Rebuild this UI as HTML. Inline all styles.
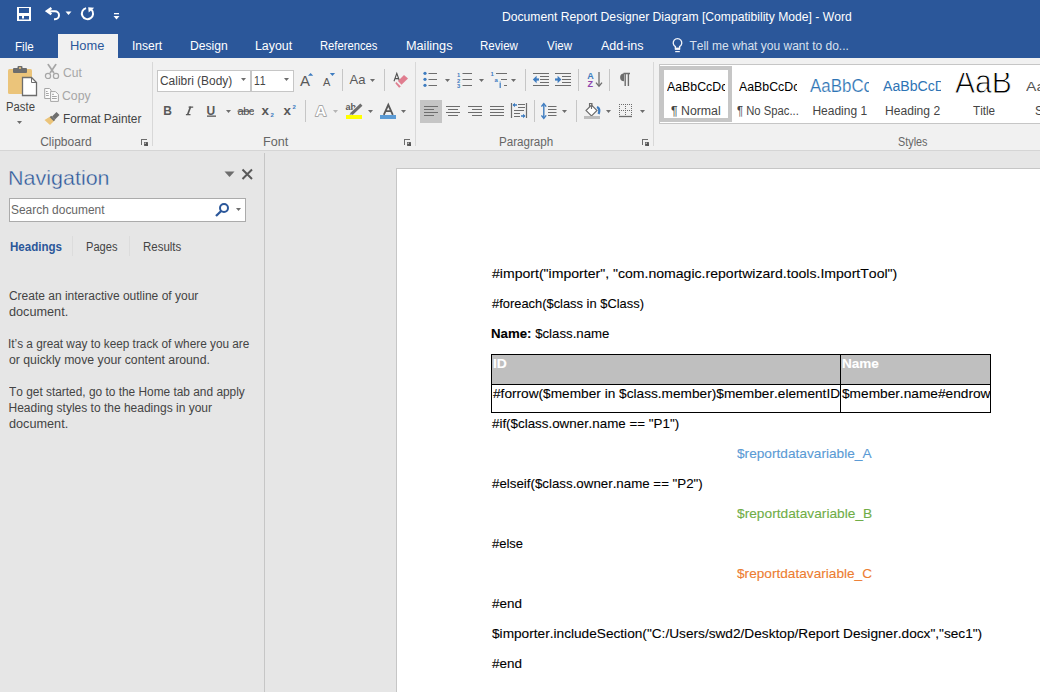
<!DOCTYPE html>
<html><head><meta charset="utf-8"><title>Word</title>
<style>
html,body{margin:0;padding:0;width:1040px;height:692px;overflow:hidden;background:#E6E6E6}
body{position:relative;font-family:"Liberation Sans",sans-serif}
.a{position:absolute;display:block}
.t{position:absolute;white-space:nowrap;transform-origin:0 0;font-kerning:none;font-variant-ligatures:none}
.d{-webkit-text-stroke:0.1px currentColor}
</style></head><body>
<div class="a" style="left:0px;top:0px;width:1040px;height:58px;background:#2B579A;"></div>
<div class="a" style="left:58px;top:34px;width:60px;height:24px;background:#F1F1F1;"></div>
<div class="t" style="left:502.00px;top:11px;font-size:12px;line-height:12px;color:#FFFFFF;transform:scaleX(1.0125);">Document Report Designer Diagram [Compatibility Mode] - Word</div>
<div class="t" style="left:14.84px;top:41px;font-size:12px;line-height:12px;color:#FFFFFF;transform:scaleX(0.9709);">File</div>
<div class="t" style="left:131.89px;top:40px;font-size:12px;line-height:12px;color:#FFFFFF;transform:scaleX(1.0064);">Insert</div>
<div class="t" style="left:190.00px;top:40px;font-size:12px;line-height:12px;color:#FFFFFF;transform:scaleX(1.0115);">Design</div>
<div class="t" style="left:254.99px;top:40px;font-size:12px;line-height:12px;color:#FFFFFF;transform:scaleX(1.0298);">Layout</div>
<div class="t" style="left:320.08px;top:40px;font-size:12px;line-height:12px;color:#FFFFFF;transform:scaleX(0.9342);">References</div>
<div class="t" style="left:405.96px;top:40px;font-size:12px;line-height:12px;color:#FFFFFF;transform:scaleX(1.0564);">Mailings</div>
<div class="t" style="left:480.05px;top:40px;font-size:12px;line-height:12px;color:#FFFFFF;transform:scaleX(0.9638);">Review</div>
<div class="t" style="left:546.95px;top:40px;font-size:12px;line-height:12px;color:#FFFFFF;transform:scaleX(0.9620);">View</div>
<div class="t" style="left:600.98px;top:40px;font-size:12px;line-height:12px;color:#FFFFFF;transform:scaleX(1.0440);">Add-ins</div>
<div class="t" style="left:70.24px;top:40px;font-size:12px;line-height:12px;color:#2B579A;transform:scaleX(1.0724);">Home</div>
<div class="t" style="left:689.43px;top:40px;font-size:12px;line-height:12px;color:#D9E1EE;">Tell me what you want to do...</div>
<div class="a" style="left:0px;top:58px;width:1040px;height:92px;background:#F1F1F1;"></div>
<div class="a" style="left:0px;top:150px;width:1040px;height:1px;background:#D5D5D5;"></div>
<div class="a" style="left:157px;top:70px;width:94px;height:22px;background:#FFFFFF;box-sizing:border-box;border:1px solid #C6C6C6;"></div>
<div class="a" style="left:251px;top:70px;width:43px;height:22px;background:#FFFFFF;box-sizing:border-box;border:1px solid #C6C6C6;"></div>
<div class="a" style="left:0px;top:151px;width:264px;height:541px;background:#E6E6E6;"></div>
<div class="a" style="left:264px;top:153px;width:1px;height:539px;background:#C6C6C6;"></div>
<div class="a" style="left:265px;top:151px;width:775px;height:541px;background:#E6E6E6;"></div>
<div class="a" style="left:9px;top:198px;width:237px;height:24px;background:#FFFFFF;box-sizing:border-box;border:1px solid #ABABAB;"></div>
<div class="a" style="left:659px;top:64px;width:381px;height:60px;background:#FFFFFF;box-sizing:border-box;border:1px solid #C6C6C6;border-right:none;"></div>
<div class="a" style="left:660px;top:66px;width:72px;height:56px;background:#FFFFFF;box-sizing:border-box;border:4px solid #C6C6C6;"></div>
<div class="a" style="left:396px;top:168px;width:644px;height:524px;background:#FFFFFF;box-sizing:border-box;border-left:1px solid #C6C6C6;border-top:1px solid #C6C6C6;"></div>
<svg class="a" style="left:17px;top:7px;" width="14" height="14" viewBox="0 0 14 14"><path fill-rule="evenodd" fill="#fff" d="M0,0 H14 V14 H0 Z M2,1 V6 H12 V1 Z M2,9 H5 V11.4 H7 V9 H12 V12.6 H2 Z"/></svg>
<svg class="a" style="left:45px;top:6px;" width="16" height="16" viewBox="0 0 16 16"><path d="M3,5.2 H10 A4,4 0 0 1 10,13.2 H9" fill="none" stroke="#fff" stroke-width="2"/><path d="M6.4,1.9 L1.9,5.1 L6.4,8.3" fill="none" stroke="#fff" stroke-width="2.4" stroke-linejoin="miter"/><polygon points="1.5,5.1 5,3 5,7.2" fill="#fff"/></svg>
<svg class="a" style="left:65px;top:11px;" width="7" height="5" viewBox="0 0 7 5"><polygon points="0.5,0.5 6.5,0.5 3.5,4" fill="#fff"/></svg>
<svg class="a" style="left:80px;top:6px;" width="15" height="15" viewBox="0 0 15 15"><path d="M6.05,2.1 A5.6,5.6 0 1 0 11.5,3.6" fill="none" stroke="#fff" stroke-width="2"/><polygon points="8.2,1.2 14.2,1.8 8.7,6.6" fill="#fff"/></svg>
<svg class="a" style="left:113px;top:12px;" width="7" height="8" viewBox="0 0 7 8"><rect x="1" y="1" width="5" height="1.3" fill="#fff"/><polygon points="0.5,4 6.5,4 3.5,7.5" fill="#fff"/></svg>
<svg class="a" style="left:671px;top:37px;" width="13" height="18" viewBox="0 0 13 18"><path d="M4.4,11.5 V9.6 A4.3,4.3 0 1 1 8.6,9.6 V11.5" fill="none" stroke="#F4F6FA" stroke-width="1.3"/><rect x="3.8" y="10.6" width="5.4" height="2.3" fill="#F4F6FA"/><rect x="4.2" y="14" width="4.6" height="1.2" fill="#F4F6FA"/></svg>
<svg class="a" style="left:7px;top:65px;" width="31" height="32" viewBox="0 0 31 32"><rect x="1" y="4" width="24" height="25" rx="1.5" fill="#EBC47A"/><rect x="6" y="3" width="14" height="5" rx="1" fill="#6D6D6D"/><rect x="10.5" y="1" width="5" height="4" rx="1" fill="#6D6D6D"/><rect x="12" y="2.2" width="2" height="1.6" fill="#EBC47A"/><path d="M15.5,12.5 H24.5 L29.5,17.5 V30.5 H15.5 Z" fill="#fff" stroke="#6D6D6D" stroke-width="1.3"/><path d="M24.5,12.5 V17.5 H29.5" fill="none" stroke="#6D6D6D" stroke-width="1"/></svg>
<svg class="a" style="left:16px;top:120px;" width="7" height="5" viewBox="0 0 7 5"><polygon points="1,1 6,1 3.5,4" fill="#6D6D6D"/></svg>
<svg class="a" style="left:42px;top:60px;" width="20" height="22" viewBox="0 0 20 22"><path d="M6.2,4.6 L11.6,12.6 M13.8,4.6 L8.4,12.6" stroke="#A6A6A6" stroke-width="1.7" stroke-linecap="round"/><circle cx="6" cy="15.9" r="2.6" fill="none" stroke="#A6A6A6" stroke-width="1.2"/><circle cx="14" cy="15.9" r="2.6" fill="none" stroke="#A6A6A6" stroke-width="1.2"/></svg>
<svg class="a" style="left:42px;top:84px;" width="20" height="20" viewBox="0 0 20 20"><path d="M2.7,4.5 H7.5 L9,6 V14.5 H2.7 Z" fill="#FCFCFC" stroke="#A6A6A6" stroke-width="1"/><path d="M8.6,7.6 H13.5 L16.4,10.5 V17.4 H8.6 Z" fill="#FCFCFC" stroke="#A6A6A6" stroke-width="1"/><path d="M4,7.5 H5.6 M4,9.5 H6.8 M4,11.5 H6.8 M10,10.3 H12 M10,12.5 H14.8 M10,14.5 H14.8" stroke="#A6A6A6" stroke-width="1"/></svg>
<svg class="a" style="left:44px;top:110px;" width="17" height="16" viewBox="0 0 17 16"><path d="M0.5,10 L7,6 L11,10 L6,15 Z" fill="#EBC47A"/><path d="M8,6.5 L12.5,2 L15.5,5 L11,9.5 Z" fill="#6D6D6D"/><path d="M6.5,6.5 L10.5,10.5" stroke="#6D6D6D" stroke-width="2"/></svg>
<svg class="a" style="left:141px;top:139px;" width="8" height="8" viewBox="0 0 8 8"><rect x="0" y="0" width="6" height="1" fill="#6D6D6D"/><rect x="0" y="0" width="1" height="6" fill="#6D6D6D"/><polygon points="3,3 7,3 7,7 3,7" fill="#6D6D6D"/><polygon points="3,3 5,3 7,5 7,7 5,7 3,5" fill="#555"/><rect x="3.6" y="3.6" width="1.2" height="1.2" fill="#F1F1F1"/></svg>
<svg class="a" style="left:404px;top:139px;" width="8" height="8" viewBox="0 0 8 8"><rect x="0" y="0" width="6" height="1" fill="#6D6D6D"/><rect x="0" y="0" width="1" height="6" fill="#6D6D6D"/><polygon points="3,3 7,3 7,7 3,7" fill="#6D6D6D"/><polygon points="3,3 5,3 7,5 7,7 5,7 3,5" fill="#555"/><rect x="3.6" y="3.6" width="1.2" height="1.2" fill="#F1F1F1"/></svg>
<svg class="a" style="left:642px;top:139px;" width="8" height="8" viewBox="0 0 8 8"><rect x="0" y="0" width="6" height="1" fill="#6D6D6D"/><rect x="0" y="0" width="1" height="6" fill="#6D6D6D"/><polygon points="3,3 7,3 7,7 3,7" fill="#6D6D6D"/><polygon points="3,3 5,3 7,5 7,7 5,7 3,5" fill="#555"/><rect x="3.6" y="3.6" width="1.2" height="1.2" fill="#F1F1F1"/></svg>
<svg class="a" style="left:240px;top:77px;" width="7" height="5" viewBox="0 0 7 5"><polygon points="1,1 6,1 3.5,4" fill="#6D6D6D"/></svg>
<svg class="a" style="left:283px;top:77px;" width="7" height="5" viewBox="0 0 7 5"><polygon points="1,1 6,1 3.5,4" fill="#6D6D6D"/></svg>
<svg class="a" style="left:298px;top:70px;" width="18" height="18" viewBox="0 0 18 18"><text x="2" y="16.2" font-family="Liberation Sans" font-size="15" fill="#595959">A</text><polygon points="10,5.8 15.2,5.8 12.6,3" fill="#3E7CC0"/></svg>
<svg class="a" style="left:321px;top:70px;" width="16" height="18" viewBox="0 0 16 18"><text x="2" y="16.2" font-family="Liberation Sans" font-size="11" fill="#595959">A</text><polygon points="8.8,3 14.1,3 11.45,6" fill="#3E7CC0"/></svg>
<div class="a" style="left:342px;top:69px;width:1px;height:22px;background:#C6C6C6;"></div>
<svg class="a" style="left:348px;top:70px;" width="20" height="18" viewBox="0 0 20 18"><text x="1.6" y="14.3" font-family="Liberation Sans" font-size="13" fill="#595959">Aa</text></svg>
<svg class="a" style="left:369px;top:78px;" width="7" height="5" viewBox="0 0 7 5"><polygon points="1,1 6,1 3.5,4" fill="#6D6D6D"/></svg>
<div class="a" style="left:384px;top:69px;width:1px;height:22px;background:#C6C6C6;"></div>
<svg class="a" style="left:388px;top:68px;" width="24" height="24" viewBox="0 0 24 24"><path d="M6,13.2 L8.8,5.4 L11.6,13.2 M7.1,10.6 H10.6" fill="none" stroke="#505050" stroke-width="1.1"/><polygon points="10,13 16,7 20,10.6 13.5,16.8" fill="#E07D8F"/><polygon points="7.3,15.3 8.3,14 12.8,18.4 11.1,19.8" fill="#E07D8F"/></svg>
<svg class="a" style="left:160px;top:102px;" width="16" height="16" viewBox="0 0 16 16"><text x="3.2" y="12.9" font-family="Liberation Sans" font-weight="bold" font-size="12" fill="#595959">B</text></svg>
<svg class="a" style="left:183px;top:102px;" width="14" height="16" viewBox="0 0 14 16"><path d="M7.6,4.6 L4.6,12.8" stroke="#595959" stroke-width="1.7"/><path d="M5.6,5.1 H10.2 M2.9,12.6 H7.5" stroke="#595959" stroke-width="1.3"/></svg>
<svg class="a" style="left:204px;top:102px;" width="16" height="17" viewBox="0 0 16 17"><text x="2.5" y="12.9" font-family="Liberation Sans" font-weight="bold" font-size="12" fill="#595959">U</text><rect x="3" y="13.5" width="9" height="1.3" fill="#595959"/></svg>
<svg class="a" style="left:225px;top:109px;" width="7" height="5" viewBox="0 0 7 5"><polygon points="1,1 6,1 3.5,4" fill="#6D6D6D"/></svg>
<svg class="a" style="left:236px;top:102px;" width="20" height="16" viewBox="0 0 20 16"><text x="1.6" y="12.8" font-family="Liberation Sans" font-size="11" fill="#505050" letter-spacing="-0.5">abc</text><rect x="1.5" y="8.6" width="16.5" height="1.1" fill="#505050"/></svg>
<svg class="a" style="left:260px;top:102px;" width="16" height="17" viewBox="0 0 16 17"><text x="1.4" y="13.1" font-family="Liberation Sans" font-weight="bold" font-size="13.4" fill="#595959">x</text><text x="10.6" y="14.8" font-family="Liberation Sans" font-weight="bold" font-size="6" fill="#3E7CC0">2</text></svg>
<svg class="a" style="left:282px;top:102px;" width="16" height="17" viewBox="0 0 16 17"><text x="1.4" y="13.1" font-family="Liberation Sans" font-weight="bold" font-size="13.4" fill="#595959">x</text><text x="10.4" y="6.8" font-family="Liberation Sans" font-weight="bold" font-size="6" fill="#3E7CC0">2</text></svg>
<div class="a" style="left:305px;top:100px;width:1px;height:22px;background:#C6C6C6;"></div>
<svg class="a" style="left:312px;top:101px;" width="18" height="18" viewBox="0 0 18 18"><text x="3.2" y="15.4" font-family="Liberation Sans" font-weight="bold" font-size="15.4" fill="#fff" stroke="#A6A6A6" stroke-width="1.8" paint-order="stroke" stroke-linejoin="round">A</text></svg>
<svg class="a" style="left:332px;top:109px;" width="7" height="5" viewBox="0 0 7 5"><polygon points="1,1 6,1 3.5,4" fill="#B5B5B5"/></svg>
<svg class="a" style="left:344px;top:101px;" width="20" height="19" viewBox="0 0 20 19"><text x="1.6" y="9.2" font-family="Liberation Sans" font-weight="bold" font-size="9" fill="#595959">ab</text><path d="M7.6,12.8 L17.4,3.6" stroke="#F1F1F1" stroke-width="4.6"/><path d="M7.6,12.8 L17.4,3.6" stroke="#6D6D6D" stroke-width="3"/><polygon points="5.4,13.8 7,11.4 8.8,13.2" fill="#6D6D6D"/><rect x="2" y="14" width="16" height="4" fill="#FFFF00"/></svg>
<svg class="a" style="left:367px;top:109px;" width="7" height="5" viewBox="0 0 7 5"><polygon points="1,1 6,1 3.5,4" fill="#6D6D6D"/></svg>
<svg class="a" style="left:378px;top:101px;" width="20" height="19" viewBox="0 0 20 19"><path d="M5.8,13.8 L10.3,3.8 L14.8,13.8 M7.6,10.2 H13" fill="none" stroke="#595959" stroke-width="1.8"/><rect x="2" y="14" width="16" height="4" fill="#5B9BD5"/></svg>
<svg class="a" style="left:400px;top:109px;" width="7" height="5" viewBox="0 0 7 5"><polygon points="1,1 6,1 3.5,4" fill="#6D6D6D"/></svg>
<svg class="a" style="left:422px;top:70px;" width="17" height="18" viewBox="0 0 17 18"><circle cx="3" cy="3.3" r="1.6" fill="#3E7CC0"/><circle cx="3" cy="9.3" r="1.6" fill="#3E7CC0"/><circle cx="3" cy="15.3" r="1.6" fill="#3E7CC0"/><path d="M6.5,3.5 H15 M6.5,9.5 H15 M6.5,15.5 H15" stroke="#6D6D6D" stroke-width="1.2"/></svg>
<svg class="a" style="left:444px;top:78px;" width="7" height="5" viewBox="0 0 7 5"><polygon points="1,1 6,1 3.5,4" fill="#6D6D6D"/></svg>
<svg class="a" style="left:456px;top:70px;" width="17" height="18" viewBox="0 0 17 18"><text x="1" y="6.5" font-family="Liberation Sans" font-weight="bold" font-size="5.8" fill="#3E7CC0">1</text><text x="1" y="12.5" font-family="Liberation Sans" font-weight="bold" font-size="5.8" fill="#3E7CC0">2</text><text x="1" y="18" font-family="Liberation Sans" font-weight="bold" font-size="5.8" fill="#3E7CC0">3</text><path d="M6.5,3.5 H16 M6.5,9.5 H16 M6.5,15.5 H16" stroke="#6D6D6D" stroke-width="1.2"/></svg>
<svg class="a" style="left:478px;top:78px;" width="7" height="5" viewBox="0 0 7 5"><polygon points="1,1 6,1 3.5,4" fill="#6D6D6D"/></svg>
<svg class="a" style="left:490px;top:70px;" width="18" height="20" viewBox="0 0 18 20"><text x="0.6" y="6.2" font-family="Liberation Sans" font-weight="bold" font-size="6" fill="#3E7CC0">1</text><text x="4.6" y="11.6" font-family="Liberation Sans" font-weight="bold" font-size="6" fill="#3E7CC0">a</text><rect x="9.6" y="13" width="1.2" height="5" fill="#3E7CC0"/><rect x="9.6" y="11.6" width="1.2" height="0.9" fill="#3E7CC0"/><path d="M6,3.5 H17 M11,9.5 H17 M14,15.5 H17" stroke="#6D6D6D" stroke-width="1.2"/></svg>
<svg class="a" style="left:510px;top:78px;" width="7" height="5" viewBox="0 0 7 5"><polygon points="1,1 6,1 3.5,4" fill="#6D6D6D"/></svg>
<div class="a" style="left:525px;top:69px;width:1px;height:22px;background:#C6C6C6;"></div>
<svg class="a" style="left:532px;top:71px;" width="18" height="16" viewBox="0 0 18 16"><path d="M1,2.5 H17 M8,5.5 H17 M8,8.5 H17 M8,11.5 H17 M1,14.5 H17" stroke="#6D6D6D" stroke-width="1.2"/><path d="M3,8.5 H7" stroke="#3E7CC0" stroke-width="2.2"/><polygon points="0.8,8.5 4.6,4.8 4.6,12.2" fill="#3E7CC0"/></svg>
<svg class="a" style="left:554px;top:71px;" width="18" height="16" viewBox="0 0 18 16"><path d="M1,2.5 H17 M8,5.5 H17 M8,8.5 H17 M8,11.5 H17 M1,14.5 H17" stroke="#6D6D6D" stroke-width="1.2"/><path d="M1,8.5 H5" stroke="#3E7CC0" stroke-width="2.2"/><polygon points="7.4,8.5 3.6,4.8 3.6,12.2" fill="#3E7CC0"/></svg>
<div class="a" style="left:578px;top:69px;width:1px;height:22px;background:#C6C6C6;"></div>
<svg class="a" style="left:586px;top:70px;" width="18" height="18" viewBox="0 0 18 18"><text x="1.3" y="8.6" font-family="Liberation Sans" font-weight="bold" font-size="9" fill="#3E7CC0">A</text><text x="1.6" y="17" font-family="Liberation Sans" font-weight="bold" font-size="9" fill="#8E44AD">Z</text><path d="M13,2 V16" stroke="#6D6D6D" stroke-width="1.3"/><path d="M10,12.6 L13,16.2 L16,12.6" fill="none" stroke="#6D6D6D" stroke-width="1.3"/></svg>
<div class="a" style="left:609px;top:69px;width:1px;height:22px;background:#C6C6C6;"></div>
<svg class="a" style="left:617px;top:72px;" width="15" height="16" viewBox="0 0 15 16"><path d="M7,1.4 A3.9,3.9 0 0 0 7,9.2 Z" fill="#6D6D6D"/><path d="M6.5,1.5 H13 M8.2,1.5 V14 M11.4,1.5 V14" stroke="#6D6D6D" stroke-width="1.4"/></svg>
<div class="a" style="left:420px;top:100px;width:22px;height:23px;background:#C5C5C5;"></div>
<svg class="a" style="left:423px;top:105px;" width="16" height="12" viewBox="0 0 16 12"><path d="M1,1.5 H15 M1,4.5 H11 M1,7.5 H15 M1,10.5 H11" stroke="#6D6D6D" stroke-width="1.2"/></svg>
<svg class="a" style="left:445px;top:105px;" width="16" height="12" viewBox="0 0 16 12"><path d="M1,1.5 H15 M3,4.5 H13 M1,7.5 H15 M3,10.5 H13" stroke="#6D6D6D" stroke-width="1.2"/></svg>
<svg class="a" style="left:467px;top:105px;" width="16" height="12" viewBox="0 0 16 12"><path d="M1,1.5 H15 M5,4.5 H15 M1,7.5 H15 M5,10.5 H15" stroke="#6D6D6D" stroke-width="1.2"/></svg>
<svg class="a" style="left:489px;top:105px;" width="16" height="12" viewBox="0 0 16 12"><path d="M1,1.5 H15 M1,4.5 H15 M1,7.5 H15 M1,10.5 H15" stroke="#6D6D6D" stroke-width="1.2"/></svg>
<svg class="a" style="left:510px;top:102px;" width="18" height="17" viewBox="0 0 18 17"><path d="M1.5,1 V16 M16.5,1 V16" stroke="#6D6D6D" stroke-width="1.2"/><path d="M8,2.5 H15 M8,5.5 H15 M4,8.5 H14 M4,11.5 H10 M4,14.5 H10" stroke="#6D6D6D" stroke-width="1.1"/><path d="M3,3 H7 M11,14 H15" stroke="#3E7CC0" stroke-width="1.3"/><polygon points="2.5,3 5,0.8 5,5.2" fill="#3E7CC0"/><polygon points="15.5,14 13,11.8 13,16.2" fill="#3E7CC0"/></svg>
<div class="a" style="left:534px;top:100px;width:1px;height:22px;background:#C6C6C6;"></div>
<svg class="a" style="left:541px;top:102px;" width="18" height="18" viewBox="0 0 18 18"><path d="M2.8,2.4 V15.6" stroke="#3E7CC0" stroke-width="1.4"/><path d="M0.4,4.6 L2.8,1.6 L5.2,4.6 M0.4,13.4 L2.8,16.4 L5.2,13.4" fill="none" stroke="#3E7CC0" stroke-width="1.4"/><path d="M7,4.5 H15.5 M7,7.5 H15.5 M7,10.5 H15.5 M7,13.5 H15.5" stroke="#6D6D6D" stroke-width="1.2"/></svg>
<svg class="a" style="left:561px;top:109px;" width="7" height="5" viewBox="0 0 7 5"><polygon points="1,1 6,1 3.5,4" fill="#6D6D6D"/></svg>
<div class="a" style="left:576px;top:100px;width:1px;height:22px;background:#C6C6C6;"></div>
<svg class="a" style="left:583px;top:101px;" width="18" height="18" viewBox="0 0 18 18"><path d="M3,9.5 L8.5,4 L14,9.5 L8.5,15 Z" fill="#fff" stroke="#6D6D6D" stroke-width="1.1"/><path d="M6.5,6 V2.5 H9 V6 M8.5,3.5 V8" fill="none" stroke="#6D6D6D" stroke-width="1.1"/><path d="M14,6 Q17.6,7.5 15.6,13" fill="none" stroke="#3E7CC0" stroke-width="2.2"/><rect x="1" y="15" width="16" height="3" fill="#BDBDBD"/></svg>
<svg class="a" style="left:605px;top:109px;" width="7" height="5" viewBox="0 0 7 5"><polygon points="1,1 6,1 3.5,4" fill="#6D6D6D"/></svg>
<svg class="a" style="left:618px;top:103px;" width="15" height="15" viewBox="0 0 15 15"><path d="M1,1.5 H14 M1,7.5 H14 M1.5,1 V13 M7.5,1 V13 M13.5,1 V13" stroke="#6D6D6D" stroke-width="1" stroke-dasharray="1 1"/><path d="M1,13.5 H14" stroke="#6D6D6D" stroke-width="1.3"/></svg>
<svg class="a" style="left:639px;top:109px;" width="7" height="5" viewBox="0 0 7 5"><polygon points="1,1 6,1 3.5,4" fill="#6D6D6D"/></svg>
<div class="a" style="left:950px;top:73px;width:70px;height:25px;overflow:hidden">
<div class="t" style="left:4.84px;top:-8px;font-size:33px;line-height:33px;color:#000000;transform:scaleX(0.9097);-webkit-text-stroke:0.9px #fff;">AaB</div>
</div>
<svg class="a" style="left:224px;top:171px;" width="11" height="7" viewBox="0 0 11 7"><polygon points="0.5,0.5 10.5,0.5 5.5,6" fill="#6D6D6D"/></svg>
<svg class="a" style="left:241px;top:168px;" width="13" height="13" viewBox="0 0 13 13"><path d="M1.5,1.5 L11,11 M11,1.5 L1.5,11" stroke="#595959" stroke-width="2"/></svg>
<svg class="a" style="left:214px;top:202px;" width="17" height="15" viewBox="0 0 17 15"><circle cx="10" cy="6" r="4" fill="none" stroke="#2B579A" stroke-width="2"/><path d="M7.2,9 L2,14" stroke="#2B579A" stroke-width="2.3"/></svg>
<svg class="a" style="left:235px;top:207px;" width="7" height="5" viewBox="0 0 7 5"><polygon points="1,1 6,1 3.5,4" fill="#6D6D6D"/></svg>
<div class="t" style="left:5.57px;top:101px;font-size:12px;line-height:12px;color:#444444;transform:scaleX(0.9428);">Paste</div>
<div class="t" style="left:62.79px;top:67px;font-size:12px;line-height:12px;color:#A6A6A6;transform:scaleX(1.0069);">Cut</div>
<div class="t" style="left:62.38px;top:90px;font-size:12px;line-height:12px;color:#A6A6A6;transform:scaleX(1.0226);">Copy</div>
<div class="t" style="left:62.83px;top:113px;font-size:12px;line-height:12px;color:#444444;transform:scaleX(0.9875);">Format Painter</div>
<div class="t" style="left:40.19px;top:136px;font-size:12px;line-height:12px;color:#666666;">Clipboard</div>
<div class="t" style="left:263.27px;top:136px;font-size:12px;line-height:12px;color:#666666;transform:scaleX(1.0506);">Font</div>
<div class="t" style="left:499.45px;top:136px;font-size:12px;line-height:12px;color:#666666;transform:scaleX(0.9673);">Paragraph</div>
<div class="t" style="left:897.51px;top:136px;font-size:12px;line-height:12px;color:#666666;transform:scaleX(0.9022);">Styles</div>
<div class="a" style="left:152px;top:62px;width:1px;height:84px;background:#D8D8D8;"></div>
<div class="a" style="left:415px;top:62px;width:1px;height:84px;background:#D8D8D8;"></div>
<div class="a" style="left:653px;top:62px;width:1px;height:84px;background:#D8D8D8;"></div>
<div class="t" style="left:159.89px;top:75px;font-size:12px;line-height:12px;color:#444444;transform:scaleX(0.9939);">Calibri (Body)</div>
<div class="t" style="left:253.80px;top:75px;font-size:12px;line-height:12px;color:#444444;transform:scaleX(0.8778);">11</div>
<div class="a" style="left:664px;top:74px;width:61px;height:22px;overflow:hidden">
<div class="t" style="left:2.98px;top:6px;font-size:13.2px;line-height:13.2px;color:#000000;transform:scaleX(0.9348);">AaBbCcDc</div>
</div>
<div class="t" style="left:670.52px;top:105px;font-size:12px;line-height:12px;color:#444444;transform:scaleX(1.0259);">¶ Normal</div>
<div class="a" style="left:735px;top:74px;width:62px;height:22px;overflow:hidden">
<div class="t" style="left:3.58px;top:6px;font-size:13.2px;line-height:13.2px;color:#000000;transform:scaleX(0.9348);">AaBbCcDc</div>
</div>
<div class="t" style="left:737.26px;top:105px;font-size:12px;line-height:12px;color:#444444;transform:scaleX(0.9386);">¶ No Spac...</div>
<div class="a" style="left:805px;top:72px;width:64px;height:26px;overflow:hidden">
<div class="t" style="left:5.37px;top:5.600000000000001px;font-size:17.6px;line-height:17.6px;color:#2E74B5;transform:scaleX(0.9615);-webkit-text-stroke:0.2px #fff;">AaBbCc</div>
</div>
<div class="t" style="left:812.42px;top:105px;font-size:12px;line-height:12px;color:#444444;">Heading 1</div>
<div class="a" style="left:878px;top:72px;width:63px;height:26px;overflow:hidden">
<div class="t" style="left:4.67px;top:6px;font-size:15.4px;line-height:15.4px;color:#2E74B5;transform:scaleX(0.9170);">AaBbCcD</div>
</div>
<div class="t" style="left:884.51px;top:105px;font-size:12px;line-height:12px;color:#444444;transform:scaleX(1.0071);">Heading 2</div>
<div class="t" style="left:973.44px;top:105px;font-size:12px;line-height:12px;color:#444444;transform:scaleX(0.9741);">Title</div>
<div class="t" style="left:1025.97px;top:80px;font-size:13px;line-height:13px;color:#555555;transform:scaleX(1.1968);">Aa</div>
<div class="t" style="left:1035.45px;top:105px;font-size:12px;line-height:12px;color:#444444;transform:scaleX(1.0133);">S</div>
<div class="t" style="left:8.24px;top:167px;font-size:21px;line-height:21px;color:#2B579A;transform:scaleX(1.0235);-webkit-text-stroke:0.35px #E6E6E6;">Navigation</div>
<div class="t" style="left:11.46px;top:203.5px;font-size:12px;line-height:12px;color:#666666;transform:scaleX(0.9944);">Search document</div>
<div class="t" style="left:9.73px;top:241px;font-size:12px;line-height:12px;color:#2B579A;font-weight:bold;transform:scaleX(0.9617);">Headings</div>
<div class="t" style="left:85.69px;top:241px;font-size:12px;line-height:12px;color:#444444;transform:scaleX(0.9262);">Pages</div>
<div class="t" style="left:143.36px;top:241px;font-size:12px;line-height:12px;color:#444444;transform:scaleX(0.9561);">Results</div>
<div class="a" style="left:72px;top:236px;width:1px;height:20px;background:#DCDCDC;"></div>
<div class="a" style="left:129px;top:236px;width:1px;height:20px;background:#DCDCDC;"></div>
<div class="t" style="left:8.89px;top:290px;font-size:12px;line-height:12px;color:#444444;">Create an interactive outline of your</div>
<div class="t" style="left:8.97px;top:306px;font-size:12px;line-height:12px;color:#444444;transform:scaleX(1.0563);">document.</div>
<div class="t" style="left:8.41px;top:338px;font-size:12px;line-height:12px;color:#444444;transform:scaleX(0.9833);">It’s a great way to keep track of where you are</div>
<div class="t" style="left:8.99px;top:354px;font-size:12px;line-height:12px;color:#444444;transform:scaleX(1.0209);">or quickly move your content around.</div>
<div class="t" style="left:9.23px;top:386px;font-size:12px;line-height:12px;color:#444444;transform:scaleX(0.9901);">To get started, go to the Home tab and apply</div>
<div class="t" style="left:8.52px;top:402px;font-size:12px;line-height:12px;color:#444444;">Heading styles to the headings in your</div>
<div class="t" style="left:8.97px;top:418px;font-size:12px;line-height:12px;color:#444444;transform:scaleX(1.0563);">document.</div>
<div class="t d" style="left:492.24px;top:267px;font-size:13.2px;line-height:13.2px;color:#000;transform:scaleX(1.0664);">#import("importer", "com.nomagic.reportwizard.tools.ImportTool")</div>
<div class="t d" style="left:492.24px;top:297px;font-size:13.2px;line-height:13.2px;color:#000;transform:scaleX(0.9777);">#foreach($class in $Class)</div>
<div class="t d" style="left:491.21px;top:327px;font-size:13.2px;line-height:13.2px;color:#000;transform:scaleX(1.0037);"><b>Name:</b> $class.name</div>
<div class="a" style="left:491px;top:354px;width:500px;height:30px;background:#BFBFBF;"></div>
<div class="a" style="left:491px;top:354px;width:500px;height:1px;background:#000;"></div>
<div class="a" style="left:491px;top:384px;width:500px;height:1px;background:#000;"></div>
<div class="a" style="left:491px;top:412px;width:500px;height:1px;background:#000;"></div>
<div class="a" style="left:491px;top:354px;width:1px;height:59px;background:#000;"></div>
<div class="a" style="left:840px;top:354px;width:1px;height:59px;background:#000;"></div>
<div class="a" style="left:990px;top:354px;width:1px;height:59px;background:#000;"></div>
<div class="t d" style="left:492.67px;top:357px;font-size:13.2px;line-height:13.2px;color:#FFFFFF;font-weight:bold;transform:scaleX(1.0542);">ID</div>
<div class="t d" style="left:841.59px;top:357px;font-size:13.2px;line-height:13.2px;color:#FFFFFF;font-weight:bold;transform:scaleX(1.0255);">Name</div>
<div class="a" style="left:492px;top:385px;width:348px;height:27px;overflow:hidden">
<div class="t d" style="left:1.24px;top:2px;font-size:13.2px;line-height:13.2px;color:#000;transform:scaleX(1.0363);">#forrow($member in $class.member)$member.elementID</div>
</div>
<div class="a" style="left:841px;top:385px;width:149px;height:27px;overflow:hidden">
<div class="t d" style="left:1.35px;top:2px;font-size:13.2px;line-height:13.2px;color:#000;transform:scaleX(1.0387);">$member.name#endrow</div>
</div>
<div class="t d" style="left:492.24px;top:417px;font-size:13.2px;line-height:13.2px;color:#000;transform:scaleX(1.0139);">#if($class.owner.name == "P1")</div>
<div class="t d" style="left:736.85px;top:447px;font-size:13.2px;line-height:13.2px;color:#5B9BD5;transform:scaleX(1.0369);">$reportdatavariable_A</div>
<div class="t d" style="left:492.24px;top:477px;font-size:13.2px;line-height:13.2px;color:#000;transform:scaleX(1.0098);">#elseif($class.owner.name == "P2")</div>
<div class="t d" style="left:736.85px;top:507px;font-size:13.2px;line-height:13.2px;color:#70AD47;transform:scaleX(1.0422);">$reportdatavariable_B</div>
<div class="t d" style="left:492.24px;top:537px;font-size:13.2px;line-height:13.2px;color:#000;transform:scaleX(0.9867);">#else</div>
<div class="t d" style="left:736.85px;top:567px;font-size:13.2px;line-height:13.2px;color:#ED7D31;transform:scaleX(1.0349);">$reportdatavariable_C</div>
<div class="t d" style="left:492.24px;top:597px;font-size:13.2px;line-height:13.2px;color:#000;transform:scaleX(1.0191);">#end</div>
<div class="t d" style="left:492.15px;top:627px;font-size:13.2px;line-height:13.2px;color:#000;transform:scaleX(1.0359);">$importer.includeSection("C:/Users/swd2/Desktop/Report Designer.docx","sec1")</div>
<div class="t d" style="left:492.24px;top:657px;font-size:13.2px;line-height:13.2px;color:#000;transform:scaleX(1.0191);">#end</div>
</body></html>
